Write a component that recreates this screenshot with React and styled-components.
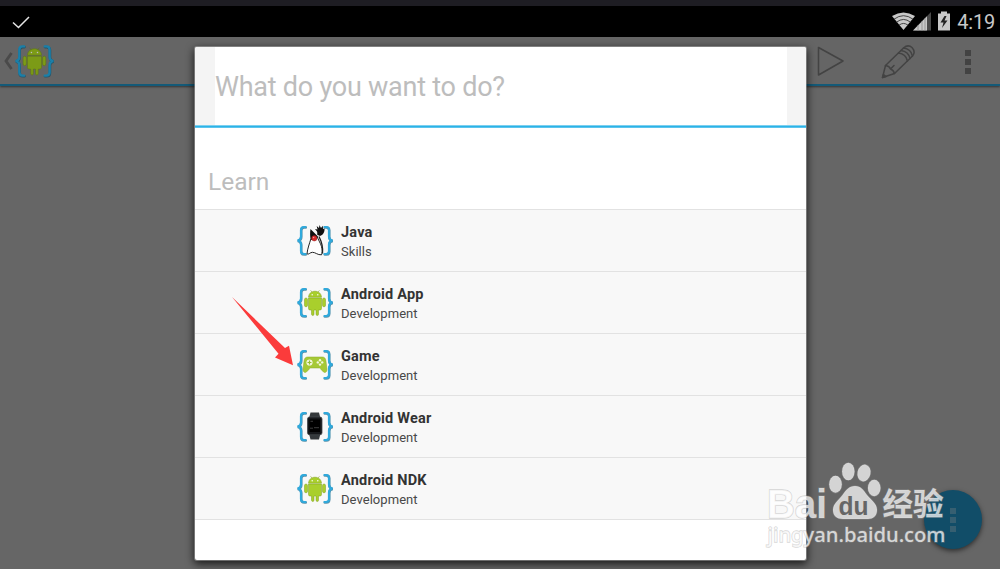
import React from 'react'
import styled, { createGlobalStyle } from 'styled-components'

const GlobalStyle = createGlobalStyle`
  * {
    box-sizing: border-box;
  }
  body {
    margin: 0;
    background: #666666;
    font-family: Roboto, "Noto Sans", sans-serif;
    overflow: hidden;
  }
  svg {
    display: block;
    flex: none;
  }
`;

const Screen = styled.div`
  position: relative;
  width: 1000px;
  height: 569px;
  overflow: hidden;
  background: #666666;
`;

const StatusBar = styled.div`
  height: 37px;
  padding: 7px 5px 0 12px;
  border-top: 6px solid #1e1d23;
  background: #000;
  display: flex;
  justify-content: space-between;
`;

const StatusIcons = styled.div`
  display: flex;
  color: #c8c8c8;
`;

const Clock = styled.span`
  margin: -3px 0 0 5px;
  font-size: 20px;
  line-height: 24px;
  letter-spacing: -0.2px;
`;

const ActionBar = styled.div`
  height: 49px;
  padding: 0 29px 0 3px;
  border-bottom: 2px solid #145a78;
  background: #656565;
  box-shadow: 0 1px 2px rgba(0, 0, 0, 0.5);
  display: flex;
  align-items: center;
  justify-content: space-between;
`;

const HomeButton = styled.div`
  display: flex;
  align-items: center;
  gap: 2px;
  padding-top: 1px;
`;

const Actions = styled.div`
  display: flex;
  align-items: center;
  padding-top: 2px;
`;

const PencilBox = styled.div`
  margin: 0 50px 0 36px;
`;

const Dots = styled.div`
  display: grid;
  gap: 3px;

  i {
    width: 6px;
    height: 6px;
    background: ${(p) => p.$color};
  }
`;

const Dialog = styled.div`
  position: absolute;
  left: 195px;
  top: 47px;
  width: 611px;
  height: 513px;
  border-radius: 2px;
  background: #fff;
  box-shadow: 0 0 0 1px rgba(190, 190, 190, 0.45), 0 3px 9px 1px rgba(0, 0, 0, 0.75);
`;

const Header = styled.div`
  height: 81px;
  padding: 0 19px 3px 20px;
  border-radius: 2px 2px 0 0;
  background: linear-gradient(#7dd0ef 0 1px, #2bb3e8 1px 2px, #5cc4ec 2px) 0 100% / 100% 3px no-repeat #f4f4f4;
`;

const Title = styled.div`
  height: 78px;
  padding-top: 2px;
  background: #fff;
  color: #bdbdbd;
  font-size: 27px;
  line-height: 76px;
  letter-spacing: -0.24px;
  white-space: nowrap;
`;

const Section = styled.div`
  height: 81px;
  padding: 37px 0 0 13px;
  color: #bdbdbd;
  font-size: 24.5px;
  line-height: 33px;
`;

const Row = styled.div`
  height: 62px;
  padding-left: 102px;
  border-top: 1px solid #e2e2e2;
  background: #f8f8f8;
  display: flex;
  align-items: center;
  gap: 7px;

  &:last-child {
    height: 63px;
    border-bottom: 1px solid #e2e2e2;
  }
`;

const Labels = styled.div`
  padding-top: 3px;
`;

const Name = styled.div`
  color: #333;
  font-size: 14.5px;
  font-weight: 700;
  line-height: 19px;
  letter-spacing: 0.2px;
`;

const Detail = styled.div`
  color: #484848;
  font-size: 13px;
  line-height: 19px;
  letter-spacing: 0.05px;
`;

const Arrow = styled.svg`
  position: absolute;
  left: 230px;
  top: 295px;
`;

const Fab = styled.div`
  position: absolute;
  left: 924px;
  top: 490px;
  width: 58px;
  height: 59px;
  border-radius: 50%;
  background: #114d68;
  box-shadow: 0 2px 5px rgba(0, 0, 0, 0.55);
  display: grid;
  place-items: center;
`;

const Watermark = styled.svg`
  position: absolute;
  left: 760px;
  top: 455px;
`;

const DimIcon = styled.div`
  filter: brightness(0.74) saturate(1.1);
`;

function Android() {
  return (
    <g fill="#a9cf2c" stroke="#7f9d1f" strokeWidth="0.5">
      <path d="M11.5 9.7C11.7 6 14.5 3.7 18 3.7s6.3 2.3 6.5 6z" />
      <path d="M13.5 2.7l1.5 2M22.5 2.7l-1.5 2" />
      <path d="M11.5 10.5h13v10.500q0 1.500-1.500 1.500h-1.500v4q0 1.500-1.200 1.500t-1.300-1.500v-4h-2v4q0 1.500-1.200 1.500t-1.300-1.500v-4H13q-1.500 0-1.500-1.500z" />
      <rect x="7.5" y="10.5" width="3" height="8.8" rx="1.5" />
      <rect x="25.5" y="10.5" width="3" height="8.8" rx="1.5" />
      <circle cx="15.2" cy="7.2" r="0.7" fill="#fff" stroke="none" />
      <circle cx="20.8" cy="7.2" r="0.7" fill="#fff" stroke="none" />
    </g>
  )
}

function Duke() {
  return (
    <g>
      <path d="M14 13C12.500 18 10.500 23 10 28.300c1.500 1.300 3-1.500 5.500-1.500 3 0 5 2.800 9 2.500 1.500-4 .2-9-2-13L20 11z" fill="#fff" stroke="#222" strokeWidth="1" />
      <path d="M13.500 3.500L21 11c-2 1-4 3.300-7 3.500-1.200-3-1-8-.5-11z" fill="#111" />
      <path d="M20 9c.5-1 .3-2 0-3l-2-2.500 2.500.6-.8-3.700 2.300 2 .5-3 1.500 3 1.800-2.200.2 3.200 1.500-.5c.4 3.600-1.500 6.500-4.500 7.600z" fill="#111" />
      <path d="M22 11q4.500 9 3.500 17" fill="none" stroke="#222" strokeWidth="1.300" />
      <circle cx="17.300" cy="12.800" r="2.700" fill="#d92b2b" stroke="#7d1414" strokeWidth="0.400" />
      <circle cx="16.600" cy="12" r="0.700" fill="#ff9a9a" />
    </g>
  )
}

function Gamepad() {
  return (
    <g>
      <path d="M10.5 7.500h15c2 0 3 1.400 3.400 3.500l1 8c.3 2.400-.6 4-2.200 4-1.800 0-3.700-4-5.200-4.500h-9C12 19 10 23 8.300 23c-1.600 0-2.500-1.600-2.200-4l1-8c.4-2.100 1.400-3.500 3.400-3.500z" fill="#a6c936" stroke="#8bab26" strokeWidth="0.5" />
      <circle cx="12.500" cy="13" r="3.100" fill="#f4f8df" />
      <path d="M12.500 11v4M10.500 13h4" stroke="#9abd32" strokeWidth="1.200" />
      <g fill="#f4f8df">
        <circle cx="23" cy="10.700" r="1.200" />
        <circle cx="23" cy="15.100" r="1.200" />
        <circle cx="20.800" cy="12.900" r="1.200" />
        <circle cx="25.200" cy="12.900" r="1.200" />
      </g>
    </g>
  )
}

function Watch() {
  return (
    <g>
      <path d="M13.500 1h8.500l1.500 6v15l-1.500 6h-8.500L12 22V7z" fill="#34383b" />
      <rect x="10.500" y="5.500" width="14.500" height="17.800" rx="2" fill="#15171a" stroke="#43484c" strokeWidth="0.8" />
      <rect x="12.500" y="8" width="10.500" height="12.500" fill="#000" />
      <path d="M13.500 9.800h2.500M13 16.700h3M17 16.200h5" stroke="#666" strokeWidth="0.6" />
    </g>
  )
}

const pictures = {
  android: Android,
  duke: Duke,
  gamepad: Gamepad,
  watch: Watch,
}

function BraceIcon({ picture, width = 37, height = 31 }) {
  const Picture = pictures[picture]
  const braces = 'M9 1.500H7.500Q4.500 1.500 4.500 4.500V11Q4.500 14.500 1 15Q4.500 15.500 4.500 19V25.500Q4.500 28.500 7.500 28.500H9M28 1.500H29.500Q32.500 1.500 32.500 4.500V11Q32.500 14.500 36 15Q32.500 15.500 32.500 19V25.500Q32.500 28.500 29.500 28.500H28'

  return (
    <svg width={width} height={height} viewBox="0.5 -0.5 37 31" overflow="visible">
      <path d={braces} transform="translate(.3 .6)" fill="none" stroke="#176587" strokeOpacity="0.7" strokeWidth="2.5" strokeLinecap="round" />
      <path d={braces} fill="none" stroke="#2fa9dc" strokeWidth="2.2" strokeLinecap="round" />
      <g transform="translate(.5 0)">
        <Picture />
      </g>
    </svg>
  )
}

function Overflow({ color }) {
  return (
    <Dots $color={color}>
      <i /><i /><i />
    </Dots>
  )
}

const courses = [
  { name: 'Java', detail: 'Skills', picture: 'duke' },
  { name: 'Android App', detail: 'Development', picture: 'android' },
  { name: 'Game', detail: 'Development', picture: 'gamepad' },
  { name: 'Android Wear', detail: 'Development', picture: 'watch' },
  { name: 'Android NDK', detail: 'Development', picture: 'android' },
]

function App() {
  return (
    <Screen>
      <GlobalStyle />
      <StatusBar>
        <svg width="19" height="18" viewBox="0 0 19 18">
          <path d="M1 9.500l5.500 5L17 4" fill="none" stroke="#e6e6e6" strokeWidth="1.5" />
        </svg>
        <StatusIcons>
          <svg width="60" height="20" viewBox="0 0 60 20" overflow="visible">
            <path d="M0 3Q11.500-4 23 3L11.500 17z" fill="#c8c8c8" />
            <path d="M2 6.200q9.500-7 19 0M4.500 9.200q7-5.500 14 0M7 12.200q4.500-3.500 9 0" fill="none" stroke="#333" strokeWidth="0.9" />
            <path d="M21 17.500L39-1v18.500z" fill="#4a4a4a" />
            <path d="M21 17.500L35 3.300v14.200z" fill="#c8c8c8" />
            <path d="M26 12v6M30 8v10M33 5v13" stroke="#888" strokeWidth="0.8" />
            <path d="M46 .5h3v-2h6v2h3v17H46z" fill="#c8c8c8" />
            <path d="M52.500 3L48.500 9.500h3L50 15l5.500-7.500h-3l2-4.500z" fill="#222" />
          </svg>
          <Clock>4:19</Clock>
        </StatusIcons>
      </StatusBar>
      <ActionBar>
        <HomeButton>
          <svg width="10" height="18" viewBox="0 0 10 18">
            <path d="M8.500 1L3 9l5.500 8" fill="none" stroke="#4a4a4a" strokeWidth="2.8" />
          </svg>
          <DimIcon>
            <BraceIcon picture="android" width={40} height={34} />
          </DimIcon>
        </HomeButton>
        <Actions>
          <svg width="28" height="31" viewBox="0 0 28 31">
            <path d="M1.500 1.500v27.500L26 15z" fill="none" stroke="#434343" strokeWidth="1.6" strokeLinejoin="round" />
          </svg>
          <PencilBox>
            <svg width="34" height="34" viewBox="0 0 34 34">
              <g fill="none" stroke="#434343" strokeWidth="1.5" strokeLinejoin="round" strokeLinecap="round">
                <path d="M1.500 32.500L4.500 20.500L22.500 3Q27-1 31 2.500Q35 7 31.500 11L13.500 28.500z" />
                <path d="M4.500 20.500q4 .5 5 3.500 3 1 4 4.500M9.500 24l3.500-3.500" />
                <path d="M22.500 3q7.500 1 9 8M20 5.500q7.500 1 9 8M17.500 8q7.500 1 9 8" />
                <path d="M1.500 32.500l3.500-1-2.500-2z" fill="#434343" />
              </g>
            </svg>
          </PencilBox>
          <Overflow color="#434343" />
        </Actions>
      </ActionBar>
      <Fab>
        <Overflow color="#365f71" />
      </Fab>
      <Dialog>
        <Header>
          <Title>What do you want to do?</Title>
        </Header>
        <Section>Learn</Section>
        <div>
          {courses.map((course) => (
            <Row key={course.name}>
              <BraceIcon picture={course.picture} />
              <Labels>
                <Name>{course.name}</Name>
                <Detail>{course.detail}</Detail>
              </Labels>
            </Row>
          ))}
        </div>
      </Dialog>
      <Arrow width="66" height="73" viewBox="0 0 66 73">
        <path d="M2 2L55 53L59 50.800L63 70.200L45 62.500L48.500 58.800z" fill="#fb3b3b" />
      </Arrow>
      <Watermark width="200" height="100" viewBox="0 0 200 100">
        <g fill="#fff" fillOpacity="0.72" stroke="#999" strokeOpacity="0.4" strokeWidth="1.300" paintOrder="stroke">
          <ellipse cx="75.5" cy="29.300" rx="6.300" ry="8.500" />
          <ellipse cx="88.300" cy="16.500" rx="6.200" ry="8.700" />
          <ellipse cx="104" cy="18" rx="6.500" ry="8.500" transform="rotate(12 104 18)" />
          <ellipse cx="114.200" cy="33" rx="6.300" ry="8.300" />
          <path d="M95 31c6 0 8.500 4 12 9 4 5 10 8.500 10 15 0 6-4 9-9 9H83c-6 0-10-3-10-9 0-6.500 6-10 9.500-15 3.500-5 6.500-9 12.500-9z" />
          <text x="7" y="62.500" fontFamily="Liberation Sans, sans-serif" fontWeight="700" fontSize="41" textLength="60" lengthAdjust="spacingAndGlyphs">Bai</text>
          <text x="122.500" y="60" fontFamily="Noto Sans CJK SC, sans-serif" fontWeight="700" fontSize="31" textLength="61" lengthAdjust="spacingAndGlyphs">经验</text>
          <text x="7.500" y="87" fontFamily="Noto Sans, sans-serif" fontSize="20.500" fontWeight="500" textLength="178" lengthAdjust="spacingAndGlyphs">jingyan.baidu.com</text>
        </g>
        <text x="78.500" y="60" fill="#666" fontFamily="Liberation Sans, sans-serif" fontWeight="700" fontSize="25" textLength="30" lengthAdjust="spacingAndGlyphs">du</text>
      </Watermark>
    </Screen>
  )
}

export default App
